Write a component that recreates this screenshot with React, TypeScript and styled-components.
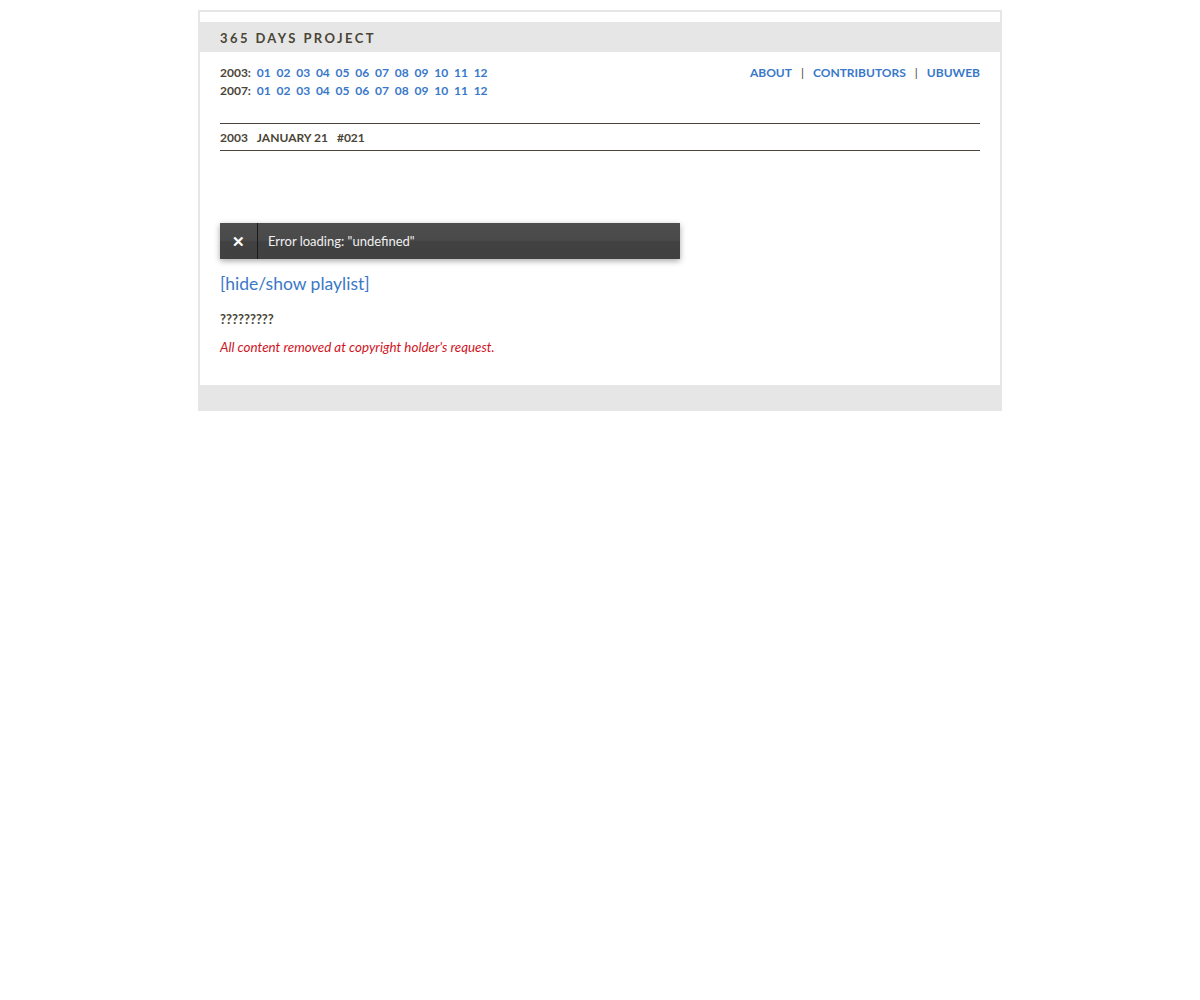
import styled, { createGlobalStyle } from "styled-components";

const GlobalStyle = createGlobalStyle`
  body {
    margin: 0;
    background: #fff;
    font-family: "Lato", "Open Sans", sans-serif;
    color: #4a4536;
  }
  a {
    color: #3a78c9;
    text-decoration: none;
  }
`;

const Page = styled.div`
  width: 800px;
  margin: 10px auto 0;
  border: 2px solid #e6e6e6;
  border-bottom: none;
  padding-top: 10px;
  background: #fff;
`;

const Masthead = styled.div`
  background: #e6e6e6;
  height: 30px;
  padding: 0 20px;
  display: flex;
  align-items: center;
`;

const Title = styled.h1`
  margin: 0;
  font-size: 13px;
  font-weight: 700;
  letter-spacing: 2.4px;
  color: #4a4536;
  padding-top: 1px;
`;

const Content = styled.div`
  padding: 12px 20px 29px;
`;

const TopRow = styled.div`
  display: flex;
  justify-content: space-between;
  align-items: flex-start;
`;

const Years = styled.div`
  display: flex;
  flex-direction: column;
`;

const YearLine = styled.div`
  font-size: 12px;
  font-weight: 700;
  line-height: 18px;
  display: flex;
  gap: 5.8px;
`;

const Nav = styled.div`
  font-size: 12px;
  font-weight: 700;
  line-height: 18px;
  display: flex;
  gap: 9px;
`;

const Pipe = styled.span`
  color: #4a4536;
  font-weight: 400;
`;

const DateBar = styled.div`
  margin-top: 23px;
  border-top: 1px solid #4a4536;
  border-bottom: 1px solid #4a4536;
  height: 26px;
  display: flex;
  align-items: center;
  gap: 9px;
  font-size: 12px;
  font-weight: 700;
`;

const Player = styled.div`
  margin-top: 72px;
  width: 460px;
  height: 36px;
  display: flex;
  background: linear-gradient(#4d4d4d 0%, #4a4a4a 48%, #414141 52%, #404040 100%);
  box-shadow: 0 2px 6px rgba(0, 0, 0, 0.35);
  color: #fff;
`;

const CloseButton = styled.div`
  width: 37px;
  border-right: 1px solid #1a1a1a;
  display: flex;
  align-items: center;
  justify-content: center;
  font-size: 15px;
  font-weight: 700;
`;

const Message = styled.div`
  display: flex;
  align-items: center;
  padding-left: 10px;
  font-size: 13px;
  color: #f0f0f0;
`;

const Toggle = styled.a`
  display: block;
  margin-top: 13px;
  font-size: 17.5px;
  line-height: 24px;
`;

const TrackTitle = styled.div`
  margin-top: 14px;
  font-size: 13px;
  font-weight: 700;
  line-height: 18px;
`;

const Notice = styled.div`
  margin-top: 10px;
  font-size: 13.4px;
  font-style: italic;
  color: #d0141e;
  line-height: 18px;
`;

const Footer = styled.div`
  height: 26px;
  background: #e6e6e6;
  margin: 0 -2px;
`;

const months = ["01", "02", "03", "04", "05", "06", "07", "08", "09", "10", "11", "12"];

export default function App() {
  return (
    <>
      <GlobalStyle />
      <Page>
        <Masthead>
          <Title>365 DAYS PROJECT</Title>
        </Masthead>
        <Content>
          <TopRow>
            <Years>
              {["2003", "2007"].map((y) => (
                <YearLine key={y}>
                  <span>{y}:</span>
                  {months.map((m) => (
                    <a key={m} href="#">
                      {m}
                    </a>
                  ))}
                </YearLine>
              ))}
            </Years>
            <Nav>
              <a href="#">ABOUT</a>
              <Pipe>|</Pipe>
              <a href="#">CONTRIBUTORS</a>
              <Pipe>|</Pipe>
              <a href="#">UBUWEB</a>
            </Nav>
          </TopRow>
          <DateBar>
            <span>2003</span>
            <span>JANUARY 21</span>
            <span>#021</span>
          </DateBar>
          <Player>
            <CloseButton>✕</CloseButton>
            <Message>Error loading: "undefined"</Message>
          </Player>
          <Toggle href="#">[hide/show playlist]</Toggle>
          <TrackTitle>?????????</TrackTitle>
          <Notice>All content removed at copyright holder's request.</Notice>
        </Content>
        <Footer />
      </Page>
    </>
  );
}
